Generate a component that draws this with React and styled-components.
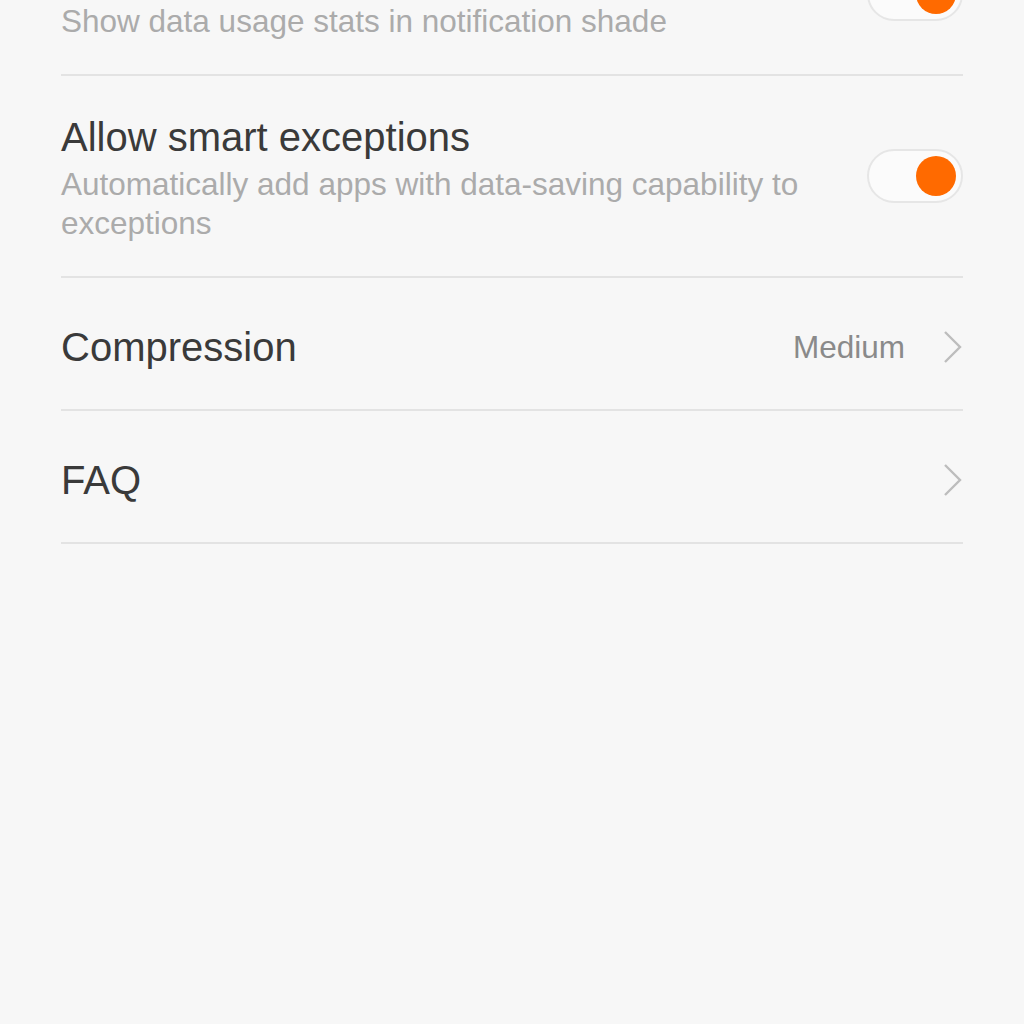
import React from 'react'
import styled, { createGlobalStyle } from 'styled-components'

const GlobalStyle = createGlobalStyle`
  html, body {
    margin: 0;
    padding: 0;
    background: #f7f7f7;
  }
  body {
    font-family: "Liberation Sans", Arial, sans-serif;
    overflow: hidden;
  }
`

const Page = styled.div`
  width: 1024px;
  height: 1024px;
  background: #f7f7f7;
  overflow: hidden;
`

const List = styled.div`
  margin: -87px 61px 0;
  display: flex;
  flex-direction: column;
`

const Row = styled.div`
  display: flex;
  align-items: center;
  gap: 24px;
  padding: ${p => (p.simple ? '44px 0 37px' : '33px 0')};
  border-bottom: 2px solid #e3e3e3;
`

const Texts = styled.div`
  flex: 1;
  min-width: 0;
  padding-right: ${p => (p.wrap ? '40px' : '0')};
`

const Title = styled.div`
  font-size: 40px;
  line-height: ${p => (p.simple ? '50px' : '56px')};
  color: #3a3a3a;
`

const Subtitle = styled.div`
  font-size: 31.5px;
  line-height: 39px;
  color: #ababab;
`

const Value = styled.span`
  font-size: 31.5px;
  color: #8a8a8a;
  margin-right: 14px;
`

const Track = styled.div`
  flex: none;
  width: 96px;
  height: 54px;
  box-sizing: border-box;
  border: 2px solid #e6e6e6;
  border-radius: 27px;
  background: #fbfbfb;
  display: flex;
  align-items: center;
  justify-content: ${p => (p.on ? 'flex-end' : 'flex-start')};
  padding: 0 5px;
`

const Knob = styled.div`
  width: 40px;
  height: 40px;
  border-radius: 50%;
  background: #ff6a00;
`

const Chevron = () => (
  <svg width="20" height="34" viewBox="0 0 20 34" style={{ flex: 'none' }}>
    <path d="M2 2 L17 17 L2 32" fill="none" stroke="#bdbdbd" strokeWidth="2.4" />
  </svg>
)

const Toggle = ({ on }) => (
  <Track on={on}>
    <Knob />
  </Track>
)

export default function App() {
  return (
    <Page>
      <GlobalStyle />
      <List>
        <Row>
          <Texts>
            <Title>Display stats</Title>
            <Subtitle>Show data usage stats in notification shade</Subtitle>
          </Texts>
          <Toggle on />
        </Row>
        <Row>
          <Texts wrap>
            <Title>Allow smart exceptions</Title>
            <Subtitle>Automatically add apps with data-saving capability to exceptions</Subtitle>
          </Texts>
          <Toggle on />
        </Row>
        <Row simple>
          <Texts>
            <Title simple>Compression</Title>
          </Texts>
          <Value>Medium</Value>
          <Chevron />
        </Row>
        <Row simple>
          <Texts>
            <Title simple>FAQ</Title>
          </Texts>
          <Chevron />
        </Row>
      </List>
    </Page>
  )
}
